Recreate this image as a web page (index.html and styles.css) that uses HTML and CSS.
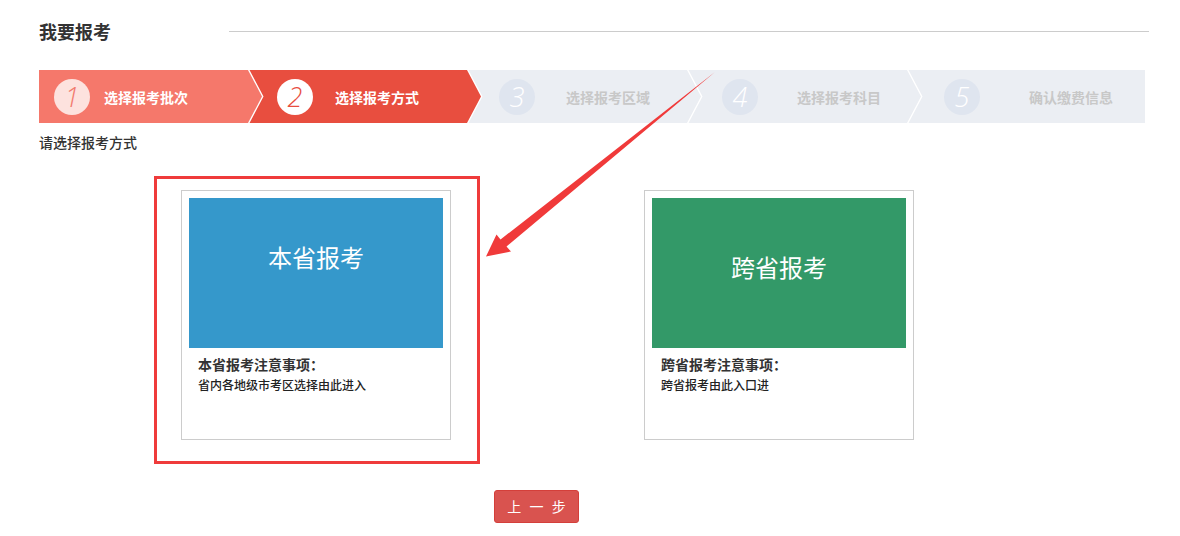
FILE: index.html
```html
<!DOCTYPE html>
<html lang="zh-CN">
<head>
<meta charset="utf-8">
<title>我要报考</title>
<link rel="stylesheet" href="styles.css">
</head>
<body>
<div class="page">
  <div class="head">
    <h1 class="head-title">我要报考</h1>
    <div class="head-line"></div>
  </div>

  <div class="steps">
    <div class="step s1 done"><span class="num">1</span><span class="label">选择报考批次</span></div>
    <div class="step s2 active"><span class="num">2</span><span class="label">选择报考方式</span></div>
    <div class="step s3"><span class="num">3</span><span class="label">选择报考区域</span></div>
    <div class="step s4"><span class="num">4</span><span class="label">选择报考科目</span></div>
    <div class="step s5"><span class="num">5</span><span class="label">确认缴费信息</span></div>
  </div>

  <p class="hint">请选择报考方式</p>

  <div class="cards">
    <div class="card">
      <div class="card-img blue"><span>本省报考</span></div>
      <div class="card-desc">
        <div class="desc-title">本省报考注意事项：</div>
        <div class="desc-text">省内各地级市考区选择由此进入</div>
      </div>
      <div class="mark-box"></div>
    </div>
    <div class="card">
      <div class="card-img green"><span>跨省报考</span></div>
      <div class="card-desc">
        <div class="desc-title">跨省报考注意事项：</div>
        <div class="desc-text">跨省报考由此入口进</div>
      </div>
    </div>
  </div>

  <div class="actions">
    <button class="btn-prev" type="button">上 一 步</button>
  </div>

  <svg class="mark-arrow" width="260" height="210" viewBox="0 0 260 210" aria-hidden="true">
    <path d="M245 12 L36.5 186.5 L41 191.5 L16 196.5 L26.5 174.5 L30.5 179.5 Z" fill="#f03a3a"/>
  </svg>
</div>
</body>
</html>
```

FILE: styles.css
```css
* { box-sizing: border-box; }
html, body { margin: 0; padding: 0; background: #fff; }
body {
  font-family: "Noto Sans CJK SC", "Noto Sans", sans-serif;
  color: #333;
}
.page {
  position: relative;
  width: 1180px;
  height: 536px;
  padding: 16px 31px 0 39px;
}
.head {
  display: flex;
  align-items: center;
  height: 30px;
}
.head-title {
  margin: 0;
  width: 190px;
  font-size: 18px;
  font-weight: 700;
  line-height: 30px;
  color: #333;
}
.head-line {
  flex: 1;
  height: 1px;
  background: #cccccc;
}

.steps {
  display: flex;
  width: 1106px;
  height: 53px;
  margin-top: 24px;
}
.step {
  display: flex;
  align-items: center;
  height: 53px;
  background: #ebeef3;
  margin-left: -14px;
  clip-path: polygon(1.5px 0, calc(100% - 14px) 0, 100% 50%, calc(100% - 14px) 100%, 1.5px 100%, 15.5px 50%);
}
.num {
  width: 36px;
  height: 36px;
  border-radius: 50%;
  flex: 0 0 36px;
  background: #dfe5ef;
  color: #fff;
  font-family: "Open Sans", "DejaVu Sans", sans-serif;
  font-style: italic;
  font-weight: 300;
  font-size: 27px;
  line-height: 36px;
  text-align: center;
}
.label {
  font-size: 14px;
  font-weight: 700;
  color: #c8c8c8;
  white-space: nowrap;
}
.s1 {
  width: 223px;
  margin-left: 0;
  padding-left: 15px;
  background: #f5786b;
  clip-path: polygon(0 0, calc(100% - 14px) 0, 100% 50%, calc(100% - 14px) 100%, 0 100%);
}
.s1 .num { background: #fde2de; color: #f27a6e; }
.s1 .label { color: #fff; margin-left: 14px; }
.s2 { width: 233px; padding-left: 29px; background: #e84e3f; }
.s2 .num { background: #fff; color: #e84e3f; }
.s2 .label { color: #fff; margin-left: 22px; }
.s3 { width: 234px; padding-left: 32px; }
.s3 .label { margin-left: 31px; }
.s4 { width: 234px; padding-left: 35px; }
.s4 .label { margin-left: 39px; }
.s5 {
  flex: 1;
  padding-left: 37px;
  clip-path: polygon(1.5px 0, 100% 0, 100% 100%, 1.5px 100%, 15.5px 50%);
}
.s5 .label { margin-left: 49px; }

.hint {
  margin: 9px 0 0;
  font-size: 14px;
  line-height: 20px;
  font-weight: 500;
  color: #333;
}

.cards {
  display: flex;
  gap: 193px;
  margin-top: 38px;
  padding-left: 142px;
}
.card {
  position: relative;
  width: 270px;
  height: 250px;
  padding: 7px 7px 0 7px;
  border: 1px solid #cccccc;
  background: #fff;
}
.card-img {
  height: 150px;
  text-align: center;
  color: #fff;
  font-size: 24px;
  line-height: 30px;
}
.card-img.blue { background: #3598cb; padding-top: 44px; }
.card-img.green { background: #339968; padding-top: 54px; }
.card-desc {
  padding: 6px 9px 0;
}
.desc-title {
  font-size: 14px;
  font-weight: 700;
  line-height: 20px;
  color: #333;
}
.desc-text {
  font-size: 12px;
  line-height: 22px;
  font-weight: 500;
  color: #222;
}
.mark-box {
  position: absolute;
  left: -28px;
  top: -15px;
  width: 326px;
  height: 288px;
  border: 3px solid #ef3b3b;
}

.actions {
  margin-top: 50px;
  padding-left: 455px;
}
.btn-prev {
  width: 85px;
  height: 33px;
  padding: 0;
  border: 1px solid #d43f3a;
  border-radius: 3px;
  background: #d9534f;
  color: #fff;
  font-family: "Noto Sans CJK SC", "Noto Sans", sans-serif;
  font-size: 14px;
  word-spacing: 5px;
  line-height: 31px;
}

.mark-arrow {
  position: absolute;
  left: 470px;
  top: 60px;
}
```
